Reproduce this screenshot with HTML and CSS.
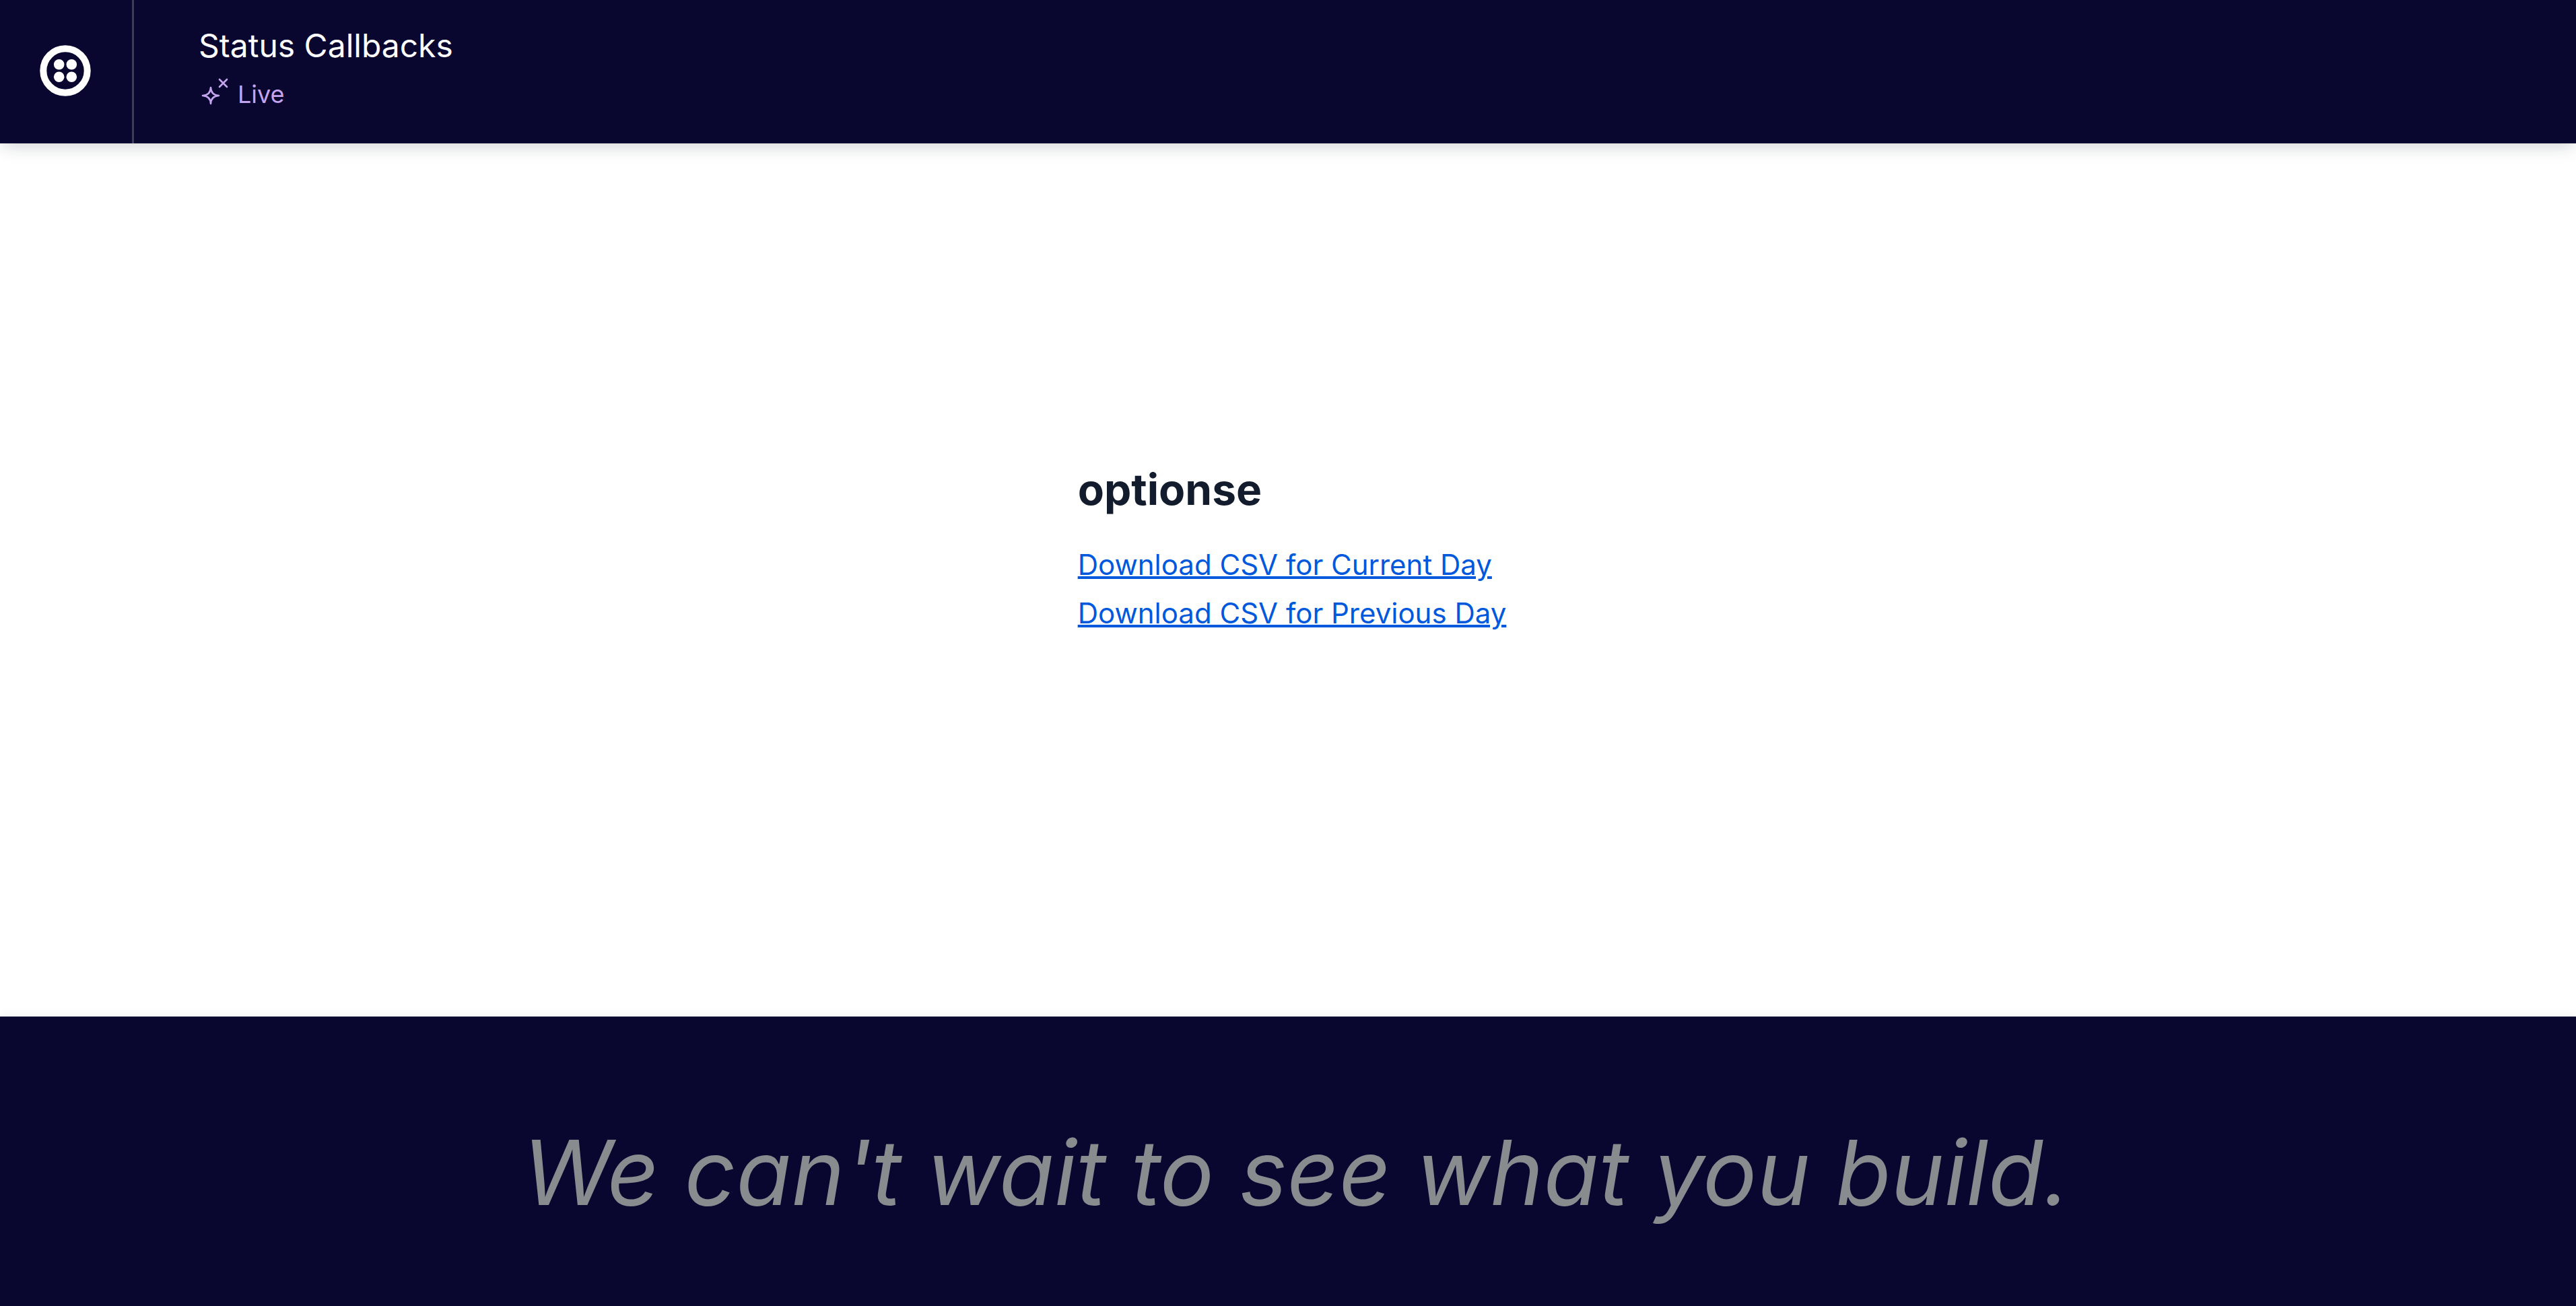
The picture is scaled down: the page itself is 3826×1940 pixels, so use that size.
FILE: index.html
```html
<!DOCTYPE html>
<html lang="en">
<head>
  <meta charset="utf-8">
  <meta name="viewport" content="width=device-width, initial-scale=1">
  <title>Status Callbacks</title>
  <link rel="stylesheet" href="styles.css">
</head>
<body>
  <header class="topbar">
    <div class="brand">
      <svg class="brand-logo" viewBox="0 0 76 76" role="img" aria-label="Twilio">
        <circle cx="38" cy="38" r="32.7" fill="none" stroke="currentColor" stroke-width="10"/>
        <circle cx="28.7" cy="28.7" r="7.8" fill="currentColor"/>
        <circle cx="47.3" cy="28.7" r="7.8" fill="currentColor"/>
        <circle cx="28.7" cy="47.3" r="7.8" fill="currentColor"/>
        <circle cx="47.3" cy="47.3" r="7.8" fill="currentColor"/>
      </svg>
    </div>
    <div class="heading">
      <h1 class="title">Status Callbacks</h1>
      <p class="status">
        <svg class="status-icon" viewBox="0 0 48 48" fill="none" stroke="currentColor" stroke-width="2.6" stroke-linecap="round" stroke-linejoin="round" aria-hidden="true">
          <path d="M18 18C18.300 25 22 29.500 30 30C22 30.500 18.300 35 18 42C17.700 35 14 30.500 6 30C14 29.500 17.700 25 18 18Z"/>
          <path d="M31 6L42 17M42 6L31 17"/>
        </svg>
        <span>Live</span>
      </p>
    </div>
  </header>
  <main class="content">
    <section class="options">
      <h2 class="options-title">optionse</h2>
      <a class="options-link" href="#current">Download CSV for Current Day</a>
      <a class="options-link" href="#previous">Download CSV for Previous Day</a>
    </section>
  </main>
  <footer class="footer">
    <p class="tagline">We can't wait to see what you build.</p>
  </footer>
</body>
</html>
```
FILE: styles.css
```css
* {
  box-sizing: border-box;
}

body {
  display: flex;
  flex-direction: column;
  min-height: 100vh;
  margin: 0;
  background: #ffffff;
  color: #121c2d;
  font-family: Inter, "Liberation Sans", sans-serif;
}

h1,
h2,
p {
  margin: 0;
}

.topbar {
  display: flex;
  background: #090630;
  color: #ffffff;
  box-shadow: 0 8px 24px -4px rgba(18, 28, 45, 0.2);
}

.brand {
  display: flex;
  align-items: center;
  padding: 0 61px 3px 59px;
  border-right: 3px solid #3e3c5c;
}

.brand-logo {
  width: 76px;
  height: 76px;
}

.heading {
  padding: 38px 96px 45px;
}

.title {
  font-size: 48px;
  line-height: 60px;
  font-weight: 400;
}

.status {
  display: flex;
  align-items: flex-start;
  gap: 10px;
  padding-top: 14px;
  color: #c5a4f0;
  font-size: 36px;
  line-height: 56px;
}

.status-icon {
  width: 48px;
  height: 48px;
}

.content {
  display: flex;
  flex: 1;
  justify-content: center;
  padding: 470px 0 96px 12px;
}

.options {
  display: flex;
  flex-direction: column;
  align-items: flex-start;
}

.options-title {
  margin-bottom: 32px;
  font-size: 64px;
  line-height: 88px;
  font-weight: 700;
}

.options-link {
  color: #0059dd;
  font-size: 42px;
  line-height: 72px;
  text-decoration-thickness: 4px;
}

.footer {
  padding: 156px 72px 124px 96px;
  background: #090630;
  color: #888c8e;
  text-align: center;
  box-shadow: 0 0 16px rgba(18, 28, 45, 0.08);
}

.tagline {
  font-size: 134px;
  line-height: 150px;
  font-style: italic;
}
```
